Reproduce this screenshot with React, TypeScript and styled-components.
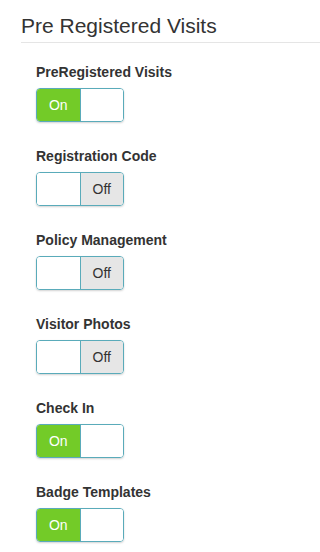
import styled, { createGlobalStyle } from "styled-components";

const GlobalStyle = createGlobalStyle`
  body {
    margin: 0;
    background: #ffffff;
    font-family: "Liberation Sans", Arial, sans-serif;
    color: #333333;
  }
`;

const Page = styled.div`
  padding: 14px 0 10px 21px;
`;

const Heading = styled.h2`
  margin: 0;
  font-size: 21px;
  font-weight: 400;
  line-height: 23px;
  padding-bottom: 5px;
  border-bottom: 1px solid #e5e5e5;
  color: #333333;
`;

const SettingsList = styled.div`
  display: flex;
  flex-direction: column;
  gap: 26px;
  padding: 21px 0 0 15px;
`;

const Setting = styled.div`
  display: flex;
  flex-direction: column;
  gap: 8px;
`;

const Label = styled.label`
  font-size: 14px;
  font-weight: 700;
  line-height: 16px;
  color: #333333;
`;

const Toggle = styled.div`
  display: flex;
  width: 86px;
  height: 32px;
  border: 1px solid #5aabba;
  border-radius: 4px;
  overflow: hidden;
  box-shadow: 0 1px 2px rgba(0, 0, 0, 0.18);
  cursor: pointer;
`;

const Half = styled.div<{ $kind: "on" | "off" | "blank" }>`
  flex: 1;
  display: flex;
  align-items: center;
  justify-content: center;
  font-size: 14px;
  color: ${({ $kind }) => ($kind === "on" ? "#ffffff" : "#333333")};
  background: ${({ $kind }) =>
    $kind === "on" ? "#73cb28" : $kind === "off" ? "#e6e6e6" : "#ffffff"};
  & + & {
    border-left: 1px solid #5aabba;
  }
`;

const settings = [
  { label: "PreRegistered Visits", on: true },
  { label: "Registration Code", on: false },
  { label: "Policy Management", on: false },
  { label: "Visitor Photos", on: false },
  { label: "Check In", on: true },
  { label: "Badge Templates", on: true },
];

export default function App() {
  return (
    <>
      <GlobalStyle />
      <Page>
        <Heading>Pre Registered Visits</Heading>
        <SettingsList>
          {settings.map((s) => (
            <Setting key={s.label}>
              <Label>{s.label}</Label>
              <Toggle>
                {s.on ? (
                  <>
                    <Half $kind="on">On</Half>
                    <Half $kind="blank" />
                  </>
                ) : (
                  <>
                    <Half $kind="blank" />
                    <Half $kind="off">Off</Half>
                  </>
                )}
              </Toggle>
            </Setting>
          ))}
        </SettingsList>
      </Page>
    </>
  );
}
